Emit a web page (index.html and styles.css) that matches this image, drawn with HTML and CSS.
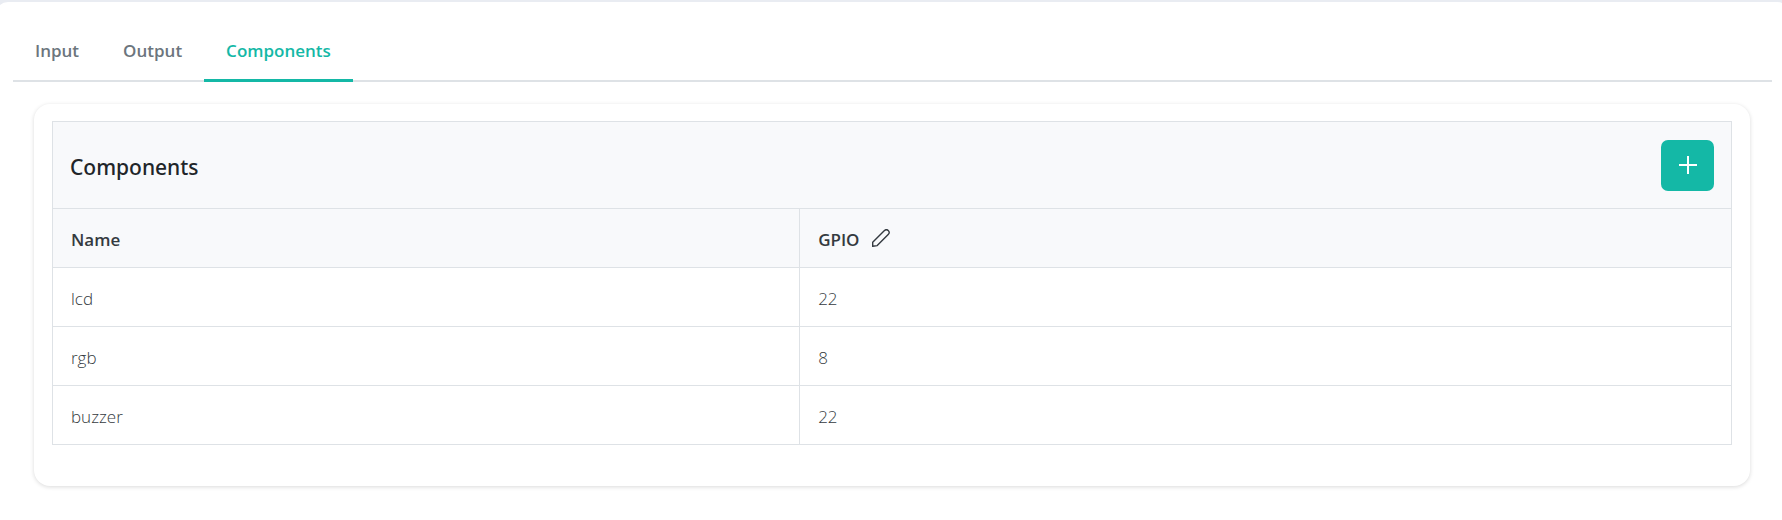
FILE: index.html
```
<!DOCTYPE html>
<html lang="en">
<head>
<meta charset="utf-8">
<title>Components</title>
<link rel="stylesheet" href="styles.css">
</head>
<body>

<div class="panel">
	<nav class="tabs">
		<a class="tab" href="#input">Input</a>
		<a class="tab" href="#output">Output</a>
		<a class="tab active" href="#components">Components</a>
	</nav>

	<div class="card" id="components">
		<div class="table-header">
			<h5>Components</h5>
			<button class="add-button" type="button" aria-label="Add component">
				<svg width="18" height="18" viewBox="0 0 18 18"><path d="M9 0v18M0 9h18" stroke="currentColor" stroke-width="2"/></svg>
			</button>
		</div>
		<table class="component-table">
			<thead>
				<tr>
					<th class="name-col">Name</th>
					<th>
						<div class="th-content">
							<span>GPIO</span>
							<button class="edit-button" type="button" aria-label="Edit GPIO">
								<svg width="18" height="18" viewBox="0 0 18 18" fill="none" stroke="currentColor" stroke-width="1.4" stroke-linejoin="round"><path d="M.7 17.300V13.200L12.200 1.700C13.500.4 15 .4 16.200 1.500C17.600 2.800 17.600 4.200 16.200 5.600L5.200 16.600z"/></svg>
							</button>
						</div>
					</th>
				</tr>
			</thead>
			<tbody>
				<tr><td>lcd</td><td>22</td></tr>
				<tr><td>rgb</td><td>8</td></tr>
				<tr><td>buzzer</td><td>22</td></tr>
			</tbody>
		</table>
	</div>
</div>

</body>
</html>
```

FILE: styles.css
```
* {
	box-sizing:border-box;
}
html {
	overflow:hidden;
}
body {
	margin:0;
	padding-top:2px;
	background-color:#e9ecf2;
	font:17px/24px "Open Sans", "Noto Sans", sans-serif;
	color:#343a40;
}
.panel {
	margin:0 -7px 0 -4px;
	padding:17px 17px 40px;
	min-height:calc(100vh + 20px);
	border-radius:12px;
	background-color:#fff;
}
.tabs {
	display:flex;
	border-bottom:2px solid #dee2e6;
}
.tab {
	margin-bottom:-2px;
	padding:20px 22px 16px;
	border-bottom:3px solid transparent;
	font-weight:600;
	color:#6c757d;
	text-decoration:none;
}
.tab.active {
	border-color:#14b8a6;
	color:#14b8a6;
}
.card {
	margin:22px 22px 0 21px;
	padding:17px 18px 41px;
	border-radius:16px;
	background-color:#fff;
	box-shadow:0 1px 4px rgba(0, 0, 0, 0.15);
}
.table-header {
	display:flex;
	align-items:center;
	justify-content:space-between;
	padding:18px 17px 17px;
	border:1px solid #dee2e6;
	border-bottom:none;
	background-color:#f8f9fb;
}
h5 {
	margin:0;
	padding-top:2px;
	font:500 21px/28px "Noto Sans", sans-serif;
	color:#212529;
}
.add-button {
	display:flex;
	align-items:center;
	justify-content:center;
	width:53px;
	height:51px;
	padding:0 0 1px;
	border:none;
	border-radius:7px;
	background-color:#14b8a6;
	color:#fff;
	cursor:pointer;
}
.component-table {
	width:100%;
	border-collapse:collapse;
	table-layout:fixed;
}
.component-table th, .component-table td {
	height:59px;
	padding:4px 18px 0;
	border:1px solid #dee2e6;
	text-align:left;
	font-weight:300;
}
.component-table th {
	background-color:#f8f9fb;
	font-weight:600;
}
.name-col {
	width:44.5%;
}
.th-content {
	display:flex;
	align-items:center;
	gap:12px;
}
.edit-button {
	display:flex;
	padding:0 0 4px;
	border:none;
	background:none;
	color:inherit;
	cursor:pointer;
}
```
